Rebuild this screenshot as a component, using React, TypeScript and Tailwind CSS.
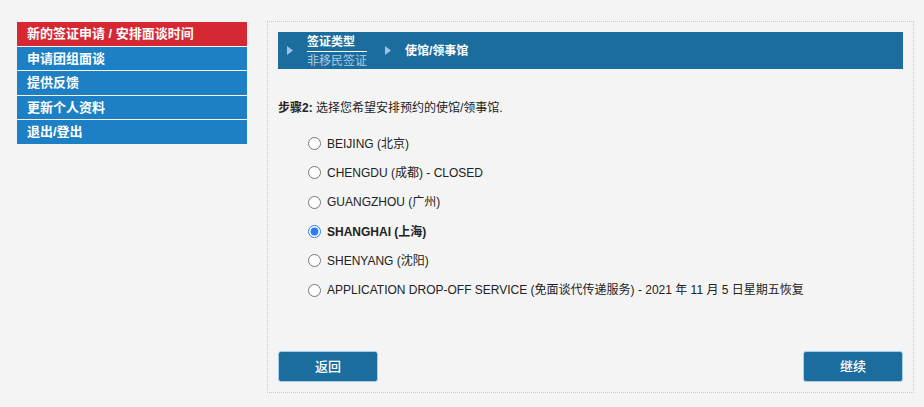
import { useState } from "react";

const MENU = [
  { key: "new", label: "新的签证申请 / 安排面谈时间", active: true },
  { key: "group", label: "申请团组面谈" },
  { key: "feedback", label: "提供反馈" },
  { key: "profile", label: "更新个人资料" },
  { key: "logout", label: "退出/登出" },
];

const POSTS = [
  { key: "beijing", label: "BEIJING (北京)" },
  { key: "chengdu", label: "CHENGDU (成都) - CLOSED" },
  { key: "guangzhou", label: "GUANGZHOU (广州)" },
  { key: "shanghai", label: "SHANGHAI (上海)" },
  { key: "shenyang", label: "SHENYANG (沈阳)" },
  { key: "dropoff", label: "APPLICATION DROP-OFF SERVICE (免面谈代传递服务) - 2021 年 11 月 5 日星期五恢复" },
];

const Arrow = () => (
  <svg width="6" height="9" viewBox="0 0 6 9" className="shrink-0">
    <path d="M0 0 L6 4.5 L0 9 Z" fill="#9cc3e0" />
  </svg>
);

export default function App() {
  const [post, setPost] = useState("shanghai");

  return (
    <div
      className="flex min-h-[407px] gap-5 bg-[#f4f4f4] pl-[17px] pt-[21px] text-[#222]"
      style={{ fontFamily: '"Liberation Sans", Arial, "Noto Sans CJK SC", sans-serif' }}
    >
      <nav className="mt-px flex w-[230px] shrink-0 flex-col gap-px self-start">
        {MENU.map((item) => (
          <a
            key={item.key}
            href="#"
            className={`flex h-[23.5px] items-center pl-[10px] text-[13px] font-bold text-white ${
              item.active ? "bg-[#d52832]" : "bg-[#1d80c4]"
            }`}
          >
            {item.label}
          </a>
        ))}
      </nav>

      <div className="flex h-[372px] w-[647px] flex-col border border-dotted border-[#c8c8c8] p-[10px]">
        <div className="flex h-[37px] items-center bg-[#1b6d9e] pl-[9px] text-[12px] font-bold text-white">
          <Arrow />
          <div className="ml-[14px] mt-[2px] flex w-[60px] flex-col">
            <span className="border-b border-white pb-[2px] leading-[14px]">签证类型</span>
            <span className="pt-[2px] font-normal leading-[14px] text-[#a9cbe4]">非移民签证</span>
          </div>
          <div className="ml-[18px]">
            <Arrow />
          </div>
          <span className="ml-[14px]">使馆/领事馆</span>
        </div>

        <p className="mt-[31px] text-[12px] leading-4">
          <span className="font-bold">步骤2:</span> 选择您希望安排预约的使馆/领事馆.
        </p>

        <ul className="mt-[13px] pl-[30px] text-[12px]">
          {POSTS.map((p) => (
            <li key={p.key} className="flex h-[29.3px] items-center">
              <label className="flex items-center gap-[6px]">
                <input
                  type="radio"
                  name="post"
                  checked={post === p.key}
                  onChange={() => setPost(p.key)}
                  className="m-0 h-[13px] w-[13px] accent-[#2a7ef0]"
                />
                <span className={post === p.key ? "font-bold" : ""}>{p.label}</span>
              </label>
            </li>
          ))}
        </ul>

        <div className="mt-auto flex justify-between">
          <button className="h-[31px] w-[100px] rounded-[3px] border border-[#a9cde9] bg-[#1b6d9e] text-[13px] font-medium text-white">
            返回
          </button>
          <button className="h-[31px] w-[100px] rounded-[3px] border border-[#a9cde9] bg-[#1b6d9e] text-[13px] font-medium text-white">
            继续
          </button>
        </div>
      </div>
    </div>
  );
}
